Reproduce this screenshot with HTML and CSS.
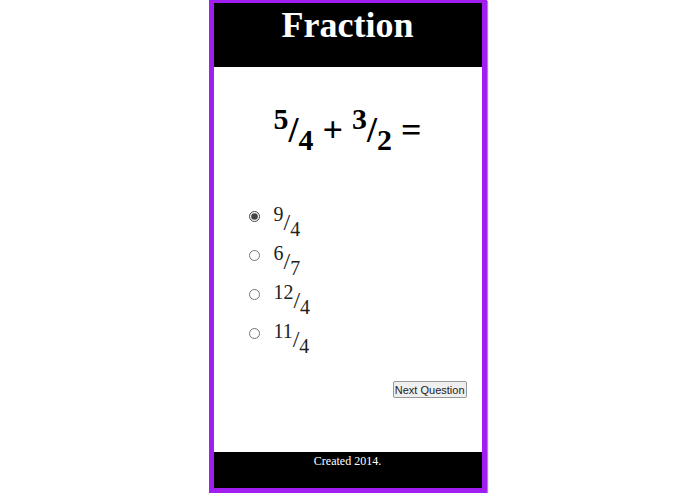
FILE: index.html
```html
<!DOCTYPE html>
<html>
<head>
<meta charset="utf-8">
<link rel="stylesheet" href="styles.css">
</head>
<body>
<div class="frame">
  <header class="top">
    <h1 class="title">Fraction</h1>
  </header>
  <main class="main">
    <div class="question"><sup>5</sup>/<sub>4</sub> + <sup>3</sup>/<sub>2</sub> =</div>
    <form class="options">
      <label class="opt"><input type="radio" name="a" checked><span class="frac"><sup>9</sup>/<sub>4</sub></span></label>
      <label class="opt"><input type="radio" name="a"><span class="frac"><sup>6</sup>/<sub>7</sub></span></label>
      <label class="opt"><input type="radio" name="a"><span class="frac"><sup>12</sup>/<sub>4</sub></span></label>
      <label class="opt"><input type="radio" name="a"><span class="frac"><sup>11</sup>/<sub>4</sub></span></label>
    </form>
    <div class="actions"><button type="button" class="next">Next Question</button></div>
  </main>
  <footer class="bottom">Created 2014.</footer>
</div>
</body>
</html>
```
FILE: styles.css
```css
html, body {
  margin: 0;
  padding: 0;
  background: #fff;
}
body {
  font-family: "Liberation Serif", "Times New Roman", serif;
}
.frame {
  width: 268px;
  height: 485px;
  margin: 0 auto;
  border: 5px solid #a01ef0;
  border-top-width: 3px;
  display: flex;
  flex-direction: column;
  box-shadow: 1px 1px 1px #999;
}
.top {
  height: 64px;
  background: #000;
  display: flex;
  justify-content: center;
}
.title {
  margin: 0;
  padding-top: 2px;
  font-family: "Liberation Serif", "Times New Roman", serif;
  font-size: 36px;
  line-height: 40px;
  font-weight: bold;
  color: #fff;
}
.main {
  flex: 1;
  display: flex;
  flex-direction: column;
}
.question {
  margin-top: 43px;
  height: 60px;
  text-align: center;
  font-family: "Liberation Serif", "Times New Roman", serif;
  font-size: 36px;
  font-weight: bold;
  line-height: 40px;
  color: #000;
}
.question sup, .question sub {
  font-size: 0.83em;
  line-height: 0;
}
.options {
  margin: 0;
  padding: 27px 0 0 35px;
  display: flex;
  flex-direction: column;
}
.opt {
  height: 39px;
  display: flex;
  align-items: center;
  font-family: "Liberation Serif", "Times New Roman", serif;
  font-size: 24px;
  color: #222;
}
.opt input {
  margin: 0 14px 0 0;
  width: 11px;
  height: 11px;
  accent-color: #444;
}
.frac {
  line-height: 20px;
  padding-top: 10px;
}
.frac sup, .frac sub {
  font-size: 0.83em;
  line-height: 0;
}
.actions {
  margin-top: 28px;
  display: flex;
  justify-content: flex-end;
  padding-right: 15px;
}
.next {
  font-family: "Liberation Sans", Arial, sans-serif;
  font-size: 11px;
  height: 17px;
  padding: 0 1px;
  background: #efefef;
  border: 1px solid #999;
  border-radius: 2px;
  color: #222;
}
.bottom {
  margin-top: auto;
  height: 36px;
  background: #000;
  color: #fff;
  text-align: center;
  font-family: "Liberation Serif", "Times New Roman", serif;
  font-size: 12px;
  line-height: 14px;
  padding-top: 2px;
  box-sizing: border-box;
}
```
